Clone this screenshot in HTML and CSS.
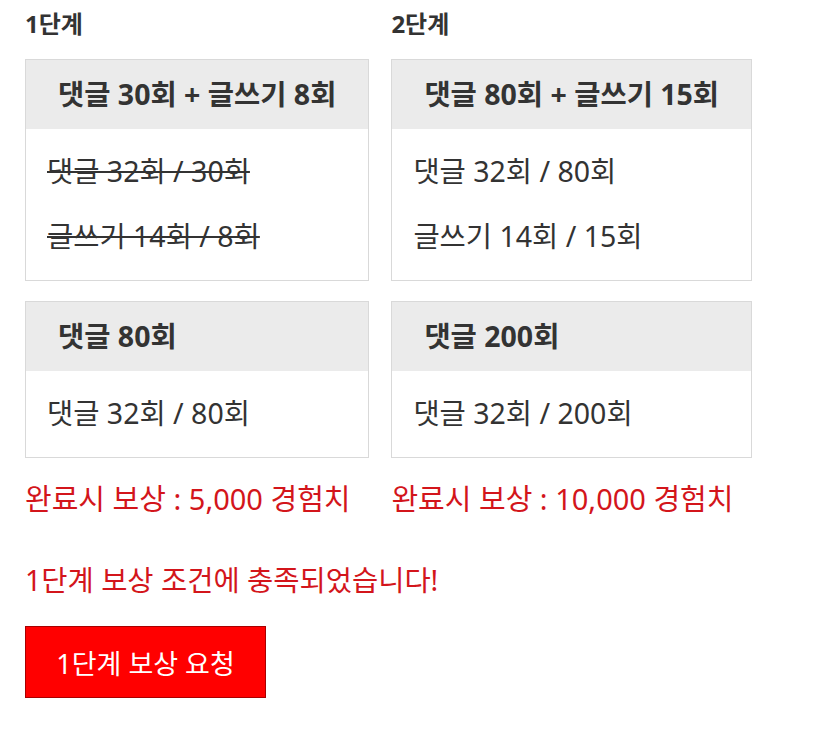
FILE: index.html
```html
<!DOCTYPE html>
<html lang="ko">
<head>
<meta charset="UTF-8" />
<meta name="viewport" content="width=device-width, initial-scale=1.0" />
<title>활동 보상</title>
<link rel="stylesheet" href="styles.css">
</head>
<body>
<div class="reward-page">
      <div class="stages">
            <div class="stage">
                  <h3 class="stage-title">1단계</h3>
                  <div class="card">
                        <div class="card-head centered">댓글 30회 + 글쓰기 8회</div>
                        <div class="card-body">
                              <p class="done">댓글 32회 / 30회</p>
                              <p class="done">글쓰기 14회 / 8회</p>
                        </div>
                  </div>
                  <div class="card">
                        <div class="card-head">댓글 80회</div>
                        <div class="card-body">
                              <p>댓글 32회 / 80회</p>
                        </div>
                  </div>
                  <p class="reward">완료시 보상 : 5,000 경험치</p>
            </div>
            <div class="stage">
                  <h3 class="stage-title">2단계</h3>
                  <div class="card">
                        <div class="card-head centered">댓글 80회 + 글쓰기 15회</div>
                        <div class="card-body">
                              <p>댓글 32회 / 80회</p>
                              <p>글쓰기 14회 / 15회</p>
                        </div>
                  </div>
                  <div class="card">
                        <div class="card-head">댓글 200회</div>
                        <div class="card-body">
                              <p>댓글 32회 / 200회</p>
                        </div>
                  </div>
                  <p class="reward">완료시 보상 : 10,000 경험치</p>
            </div>
      </div>
      <p class="notice">1단계 보상 조건에 충족되었습니다!</p>
      <button class="claim">1단계 보상 요청</button>
</div>
</body>
</html>
```

FILE: styles.css
```css
body {
      margin: 0;
      padding: 0;
      background: #fff;
      color: #333;
      font-family: "Noto Sans", "Noto Sans CJK KR", sans-serif;
}
.reward-page {
      padding: 6px 25px;
}
.stages {
      display: flex;
      align-items: flex-start;
      gap: 22px;
}
.stage {
      display: flex;
      flex-direction: column;
}
.stage-title {
      margin: 0 0 17px;
      font-size: 24px;
      line-height: 36px;
      font-weight: 700;
}
.card {
      border: 1px solid #d9d9d9;
      margin-bottom: 20px;
}
.card-head {
      background-color: #ebebeb;
      padding: 14px 32px;
      line-height: 41px;
      font-size: 28.5px;
      font-weight: 700;
}
.card-head.centered {
      text-align: center;
}
.card-body {
      padding: 22px 21px 24px;
}
.card-body p {
      margin: 0;
      font-size: 28.5px;
      line-height: 40px;
}
.card-body p + p {
      margin-top: 25px;
}
.card-body .done {
      text-decoration: line-through;
      text-decoration-thickness: 2px;
}
.reward {
      margin: 0;
      color: #d3151b;
      font-size: 29px;
      line-height: 42px;
}
.notice {
      margin: 40px 0 26px;
      color: #d3151b;
      font-size: 28.5px;
      line-height: 40px;
}
.claim {
      background-color: #ff0000;
      color: #fff;
      border: 1px solid #a80000;
      width: 241px;
      height: 72px;
      font-family: inherit;
      font-size: 27px;
      cursor: pointer;
}
```
